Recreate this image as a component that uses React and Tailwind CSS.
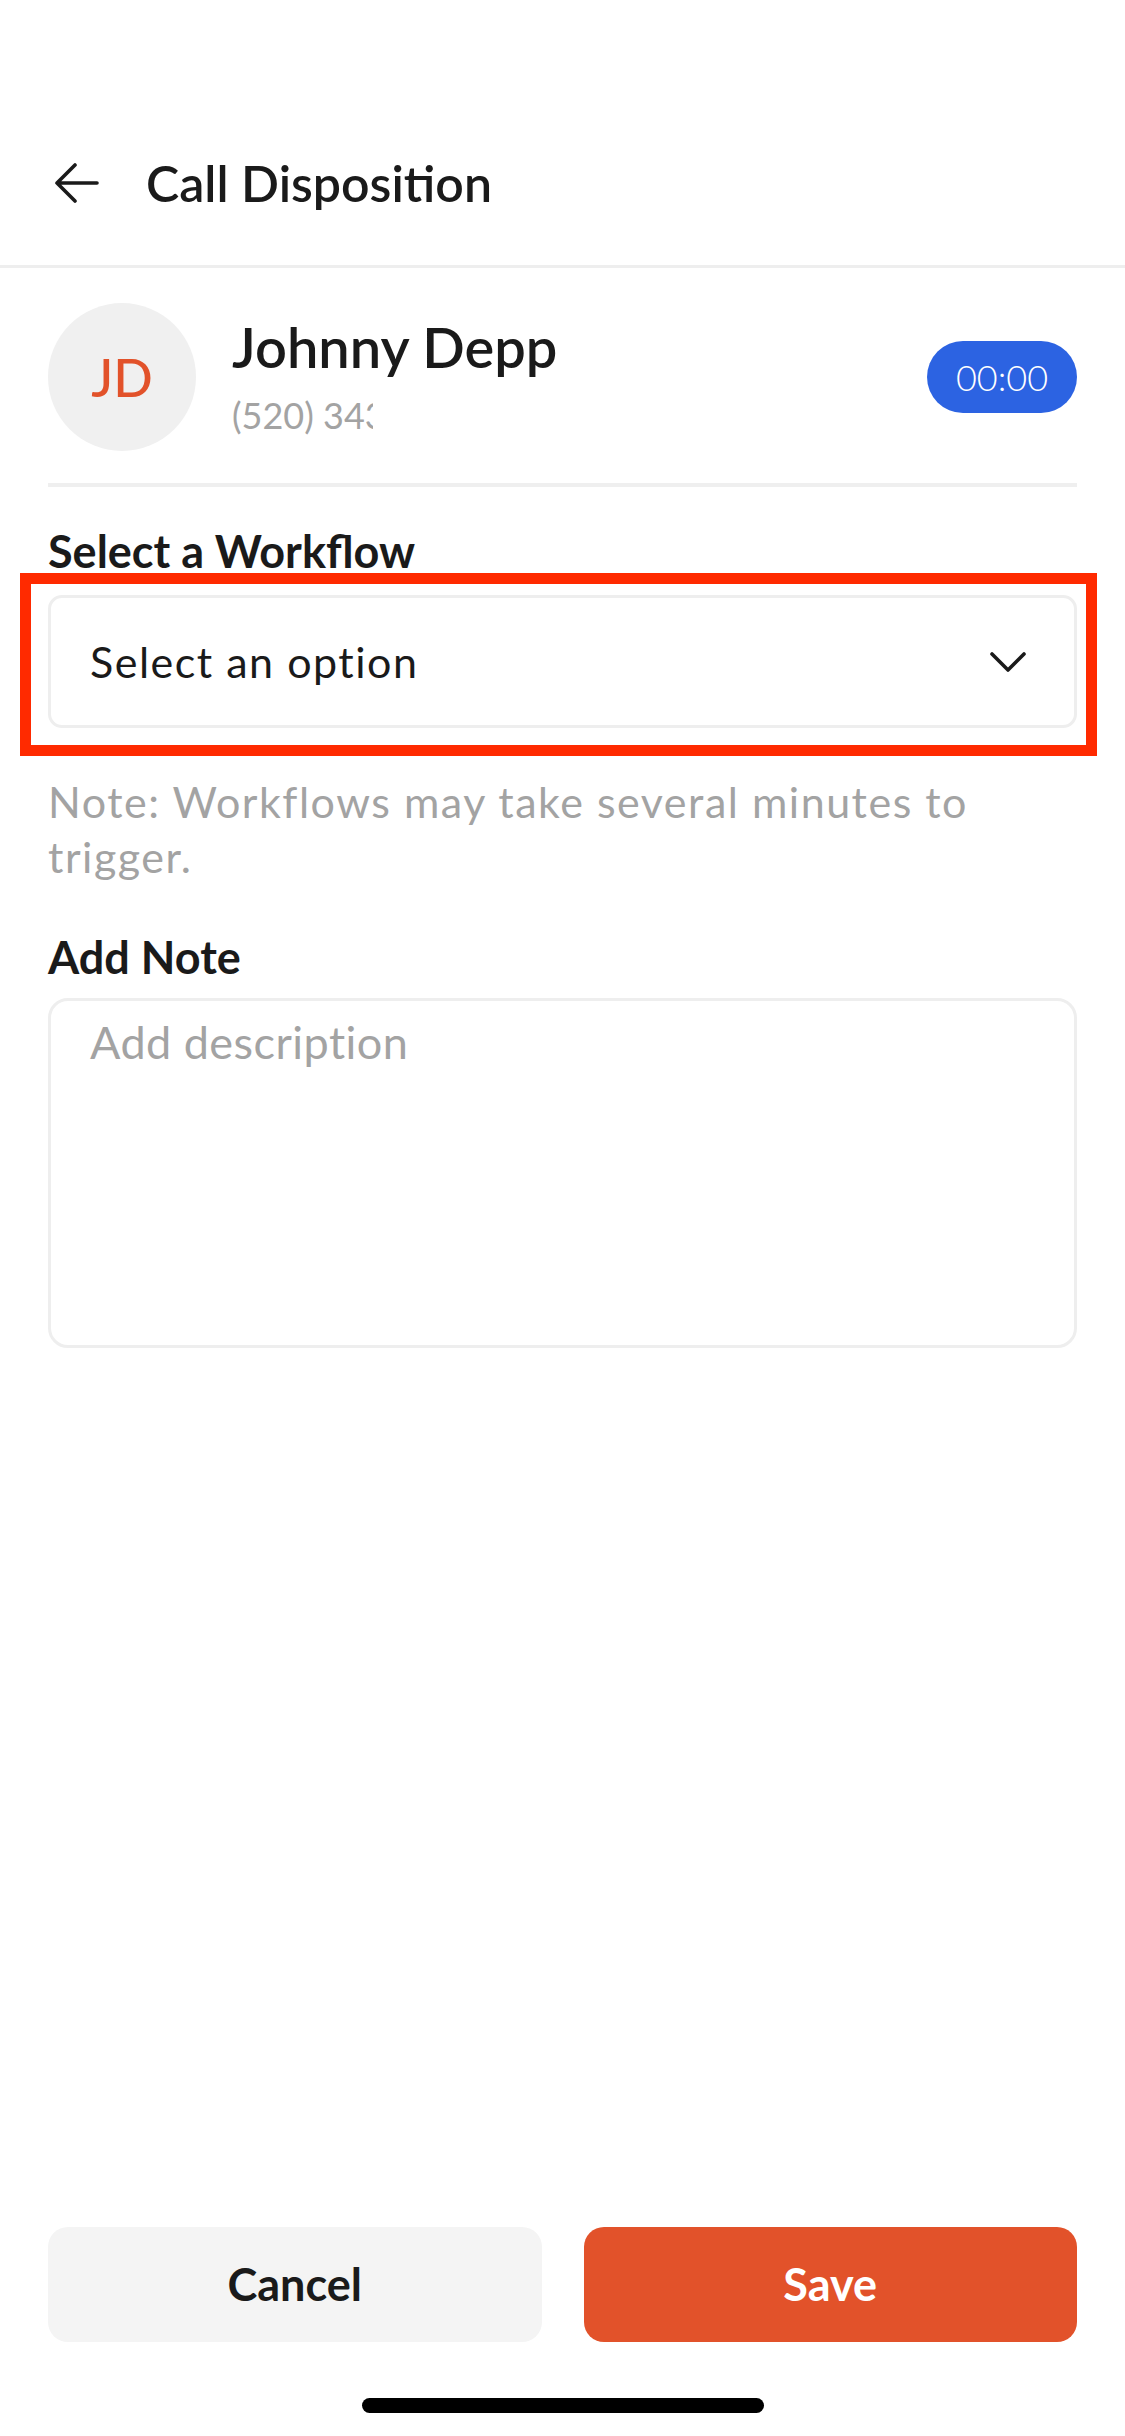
import React from 'react'

const ChevronDown = () => (
  <svg width="36" height="22" viewBox="0 0 36 22" fill="none">
    <path d="M2 3 L18 19 L34 3" stroke="#1a1a1a" strokeWidth="3.6" strokeLinecap="round" strokeLinejoin="round" />
  </svg>
)

const BackArrow = () => (
  <svg width="44" height="40" viewBox="0 0 44 40" fill="none">
    <path d="M20 2 L2 20 L20 38 M2 20 H42" stroke="#1a1a1a" strokeWidth="3.6" strokeLinecap="round" strokeLinejoin="round" />
  </svg>
)

const App = () => {
  return (
    <div className="h-[2436px] w-full bg-white flex flex-col font-['Lato',sans-serif] text-[#1a1a1a]">
      {/* Header */}
      <div className="pt-[100px] border-b-[3px] border-[#eeeeee]">
        <div className="h-[165px] flex items-center pl-[55px]">
          <BackArrow />
          <h1 className="ml-[47px] text-[50px] font-semibold leading-[1.2]">Call Disposition</h1>
        </div>
      </div>

      <div className="px-[48px]">
        {/* Contact */}
        <div className="pt-[35px] flex items-center">
          <div className="w-[148px] h-[148px] rounded-full bg-[#f0f0f0] flex items-center justify-center shrink-0">
            <span className="text-[52px] font-medium text-[#e2522a] leading-none">JD</span>
          </div>
          <div className="ml-[36px] flex-1 self-start pt-[10px]">
            <p className="text-[56px] font-semibold leading-[1.2]">Johnny Depp</p>
            <p className="mt-[14px] w-[141px] overflow-hidden whitespace-nowrap text-[36px] leading-[1.2] text-[#a3a3a3]">
              (520) 343-2187
            </p>
          </div>
          <div className="w-[150px] h-[72px] rounded-full bg-[#2c63e2] flex items-center justify-center">
            <span className="text-[36px] font-light text-white leading-none">00:00</span>
          </div>
        </div>
        <div className="mt-[32px] h-[4px] bg-[#efefef]"></div>

        {/* Workflow */}
        <p className="mt-[37px] text-[45px] font-bold leading-[1.2]">Select a Workflow</p>
        <div className="mt-[-5px] ml-[-28px] mr-[-20px] border-[11px] border-[#ff2a00] pt-[11px] pb-[17px] pl-[17px] pr-[9px]">
          <div className="h-[133px] border-[3px] border-[#eeeeee] rounded-[14px] pl-[39px] pr-[48px] flex items-center justify-between">
            <span className="text-[43px] leading-[1.2] tracking-[0.035em]">Select an option</span>
            <ChevronDown />
          </div>
        </div>
        <p className="mt-[18px] text-[43px] leading-[55px] tracking-[0.035em] text-[#a3a3a3]">
          Note: Workflows may take several minutes to trigger.
        </p>

        {/* Note */}
        <p className="mt-[46px] text-[45px] font-bold leading-[1.2]">Add Note</p>
        <textarea
          placeholder="Add description"
          className="mt-[14px] block w-full h-[350px] resize-none border-[3px] border-[#eeeeee] rounded-[20px] pl-[39px] pr-[39px] pt-[14px] text-[45px] leading-[1.2] tracking-[0.01em] outline-none placeholder:text-[#a3a3a3] font-['Lato',sans-serif]"
        />
      </div>

      <div className="flex-1"></div>

      {/* Actions */}
      <div className="px-[48px] flex gap-[42px]">
        <button className="flex-1 h-[115px] rounded-[20px] bg-[#f4f4f4] text-[45px] font-bold text-[#1a1a1a]">
          Cancel
        </button>
        <button className="flex-1 h-[115px] rounded-[20px] bg-[#e2522a] text-[45px] font-bold text-white">
          Save
        </button>
      </div>
      <div className="pt-[56px] pb-[23px] flex justify-center">
        <div className="w-[402px] h-[15px] rounded-full bg-black"></div>
      </div>
    </div>
  )
}

export default App
